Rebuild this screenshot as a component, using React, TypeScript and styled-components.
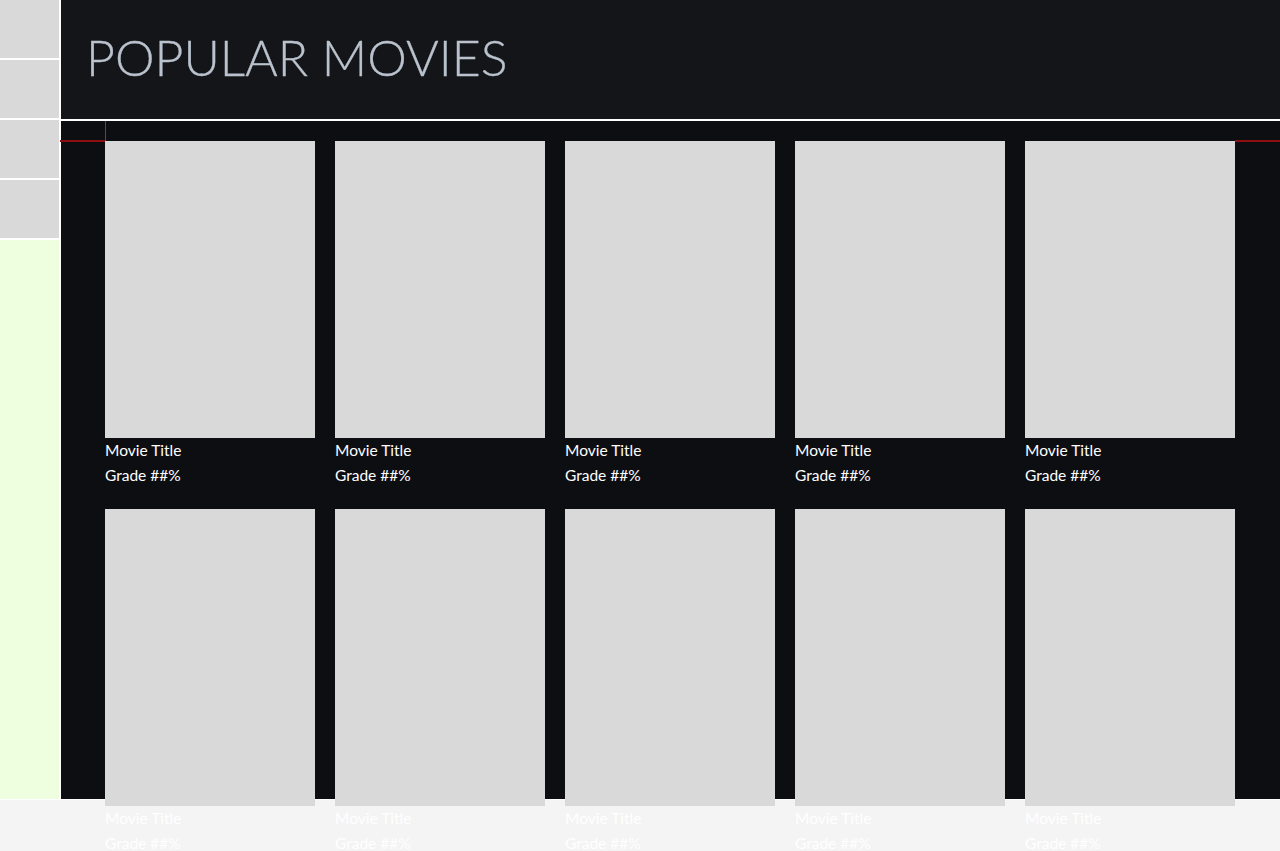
import styled, { createGlobalStyle } from "styled-components";

const movies = Array.from({ length: 10 }, (_, i) => ({
  id: i,
  title: "Movie Title",
  grade: "##",
}));

const App = () => {
  return (
    <>
      <GlobalStyle />
      <Shell>
        <Sidebar>
          {[0, 1, 2, 3].map((n) => (
            <NavItem key={n} />
          ))}
          <SidebarFill />
        </Sidebar>
        <Column>
          <Header>
            <Title>POPULAR MOVIES</Title>
          </Header>
          <Main>
            <Grid>
              {movies.map((m) => (
                <Card key={m.id}>
                  <Poster />
                  <CardText>{m.title}</CardText>
                  <CardText>Grade {m.grade}%</CardText>
                </Card>
              ))}
            </Grid>
          </Main>
        </Column>
      </Shell>
    </>
  );
};

const GlobalStyle = createGlobalStyle`
  html, body {
    margin: 0;
    padding: 0;
    background: #f4f4f4;
    font-family: Lato, "Open Sans", sans-serif;
  }
  body {
    min-height: 851px;
  }
`;

const Shell = styled.div`
  display: grid;
  grid-template-columns: 59px 1fr;
  grid-template-rows: 800px;
  column-gap: 2px;
  height: 800px;
  background: #ffffff;
`;

const Sidebar = styled.nav`
  display: flex;
  flex-direction: column;
  gap: 2px;
  padding-bottom: 1px;
`;

const NavItem = styled.div`
  height: 58px;
  background: #d9d9d9;
`;

const SidebarFill = styled.div`
  flex: 1;
  background: #eeffe0;
`;

const Column = styled.div`
  display: flex;
  flex-direction: column;
  min-width: 0;
  height: 800px;
  padding-bottom: 1px;
  box-sizing: border-box;
`;

const Header = styled.header`
  flex-shrink: 0;
  height: 121px;
  background: #141519;
  border-bottom: 2px solid #ffffff;
  display: flex;
  align-items: center;
  padding: 0 0 6px 25px;
  box-sizing: border-box;
`;

const Title = styled.h1`
  margin: 0;
  font-family: Lato, sans-serif;
  font-weight: 300;
  font-size: 50px;
  color: #b9c2cd;
  -webkit-text-stroke: 0.3px #b9c2cd;
`;

const Main = styled.main`
  flex: 1;
  min-height: 0;
  position: relative;
  background: #0d0e12;
  padding: 0 45px 0 44px;

  /* the stray red rule either side of the grid */
  &::before,
  &::after {
    content: "";
    position: absolute;
    top: 19px;
    height: 2px;
    background: #8b0f10;
  }
  &::before {
    left: -1px;
    width: 45px;
  }
  &::after {
    right: 0;
    width: 45px;
  }
`;

const Grid = styled.div`
  position: relative;
  padding-top: 20px;
  display: grid;
  grid-template-columns: repeat(5, 210px);
  grid-auto-rows: max-content;
  column-gap: 20px;
  row-gap: 21px;

  &::after {
    content: "";
    position: absolute;
    left: 0;
    top: 0;
    width: 1px;
    height: 20px;
    background: #e01010;
  }
`;

const Card = styled.div`
  display: flex;
  flex-direction: column;
`;

const Poster = styled.div`
  flex-shrink: 0;
  height: 297px;
  background: #d9d9d9;
`;

const CardText = styled.div`
  font-family: Lato, sans-serif;
  font-size: 15.5px;
  line-height: 25px;
  color: #ffffff;
`;

export default App;
